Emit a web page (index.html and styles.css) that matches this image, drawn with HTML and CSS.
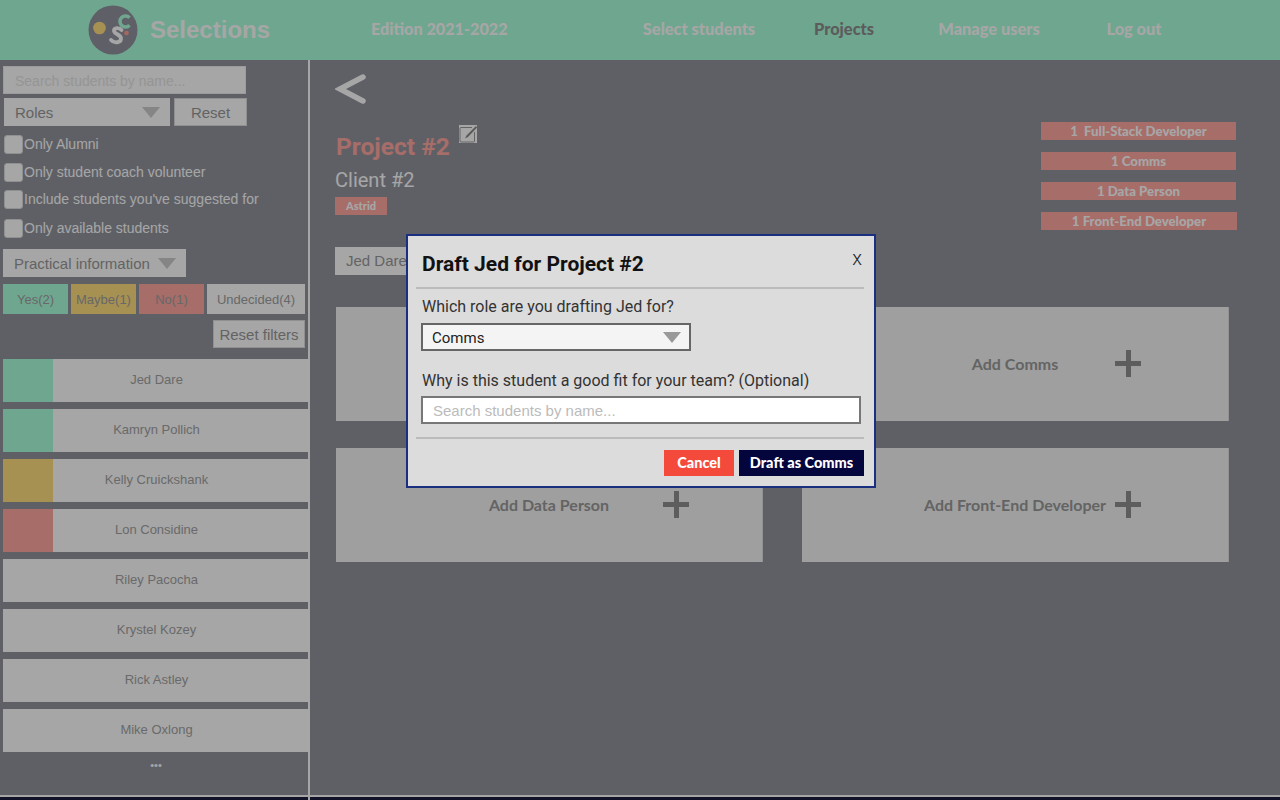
FILE: index.html
```html
<!DOCTYPE html>
<html lang="en">
<head>
<meta charset="utf-8">
<title>Selections</title>
<link rel="stylesheet" href="styles.css">
</head>
<body>
<header class="topbar">
  <div class="brand">
    <svg class="logo" viewBox="0 0 50 50" width="50" height="50">
      <circle cx="25" cy="25" r="24.500" fill="#93939f"/>
      <circle cx="11.500" cy="23" r="6.300" fill="#ffdf80"/>
      <path d="M33.500 25c-2-2.500-7.500-2.500-7.500.8 0 3.500 7 3.500 7 7.700 0 4.500-7 5-10 1.500" fill="none" stroke="#fff" stroke-width="3.800" stroke-linecap="round"/>
      <path d="M41.500 12.700a5.500 5.500 0 1 0 0 7.500" fill="none" stroke="#acffdc" stroke-width="3.500"/>
      <circle cx="38.500" cy="28" r="2.300" fill="#ff9f92"/>
    </svg>
    <span class="brand-name">Selections</span>
  </div>
  <span class="edition">Edition 2021-2022</span>
  <nav class="nav">
    <a class="nav-link">Select students</a>
    <a class="nav-link nav-active">Projects</a>
    <a class="nav-link">Manage users</a>
    <a class="nav-link">Log out</a>
  </nav>
</header>
<div class="layout">
  <aside class="sidebar">
    <input class="search" placeholder="Search students by name...">
    <div class="filter-row">
      <div class="select select-roles"><span>Roles</span><i class="caret"></i></div>
      <button class="btn btn-reset">Reset</button>
    </div>
    <label class="check check-1"><i class="box"></i>Only Alumni</label>
    <label class="check check-2"><i class="box"></i>Only student coach volunteer</label>
    <label class="check check-3"><i class="box"></i>Include students you've suggested for</label>
    <label class="check check-4"><i class="box"></i>Only available students</label>
    <div class="select select-info"><span>Practical information</span><i class="caret"></i></div>
    <div class="tabs">
      <div class="tab tab-yes">Yes(2)</div>
      <div class="tab tab-maybe">Maybe(1)</div>
      <div class="tab tab-no">No(1)</div>
      <div class="tab tab-undecided">Undecided(4)</div>
    </div>
    <div class="reset-row"><button class="btn btn-filters">Reset filters</button></div>
    <ul class="students">
      <li class="student"><i class="status st-yes"></i><span>Jed Dare</span></li>
      <li class="student"><i class="status st-yes"></i><span>Kamryn Pollich</span></li>
      <li class="student"><i class="status st-maybe"></i><span>Kelly Cruickshank</span></li>
      <li class="student"><i class="status st-no"></i><span>Lon Considine</span></li>
      <li class="student"><i class="status"></i><span>Riley Pacocha</span></li>
      <li class="student"><i class="status"></i><span>Krystel Kozey</span></li>
      <li class="student"><i class="status"></i><span>Rick Astley</span></li>
      <li class="student"><i class="status"></i><span>Mike Oxlong</span></li>
    </ul>
    <div class="more">•••</div>
  </aside>
  <main class="content">
    <svg class="back" viewBox="0 0 32 30" width="32" height="30"><path d="M28 3 5 15l23 12" fill="none" stroke="#fff" stroke-width="5.500" stroke-linecap="round"/></svg>
    <div class="project-head">
      <div class="project-info">
        <div class="title-row">
          <h1 class="project-title">Project #2</h1>
          <svg class="edit" viewBox="0 0 18 18" width="18" height="18">
            <rect width="18" height="18" fill="#fff"/>
            <path d="M13 2.500H2a1 1 0 0 0-1 1V16a1 1 0 0 0 1 1h12.500a1 1 0 0 0 1-1V7" fill="none" stroke="#999" stroke-width="1"/>
            <path d="M17 1 7.500 10.500 6 13.500l3-1.500L18 2.500z" fill="#888"/>
          </svg>
        </div>
        <div class="client">Client #2</div>
        <span class="coach">Astrid</span>
      </div>
      <div class="needs">
        <div class="need">1&nbsp; Full-Stack Developer</div>
        <div class="need">1 Comms</div>
        <div class="need">1 Data Person</div>
        <div class="need need-wide">1 Front-End Developer</div>
      </div>
    </div>
    <div class="drafted"><span class="chip">Jed Dare</span></div>
    <div class="slots">
      <div class="slot"><span>Add Full-Stack Developer</span><i class="plus"></i></div>
      <div class="slot"><span>Add Comms</span><i class="plus"></i></div>
      <div class="slot"><span>Add Data Person</span><i class="plus"></i></div>
      <div class="slot"><span>Add Front-End Developer</span><i class="plus"></i></div>
    </div>
  </main>
</div>
<div class="footer-bar"></div>
<div class="overlay"></div>
<div class="modal">
  <div class="modal-head">
    <h2 class="modal-title">Draft Jed for Project #2</h2>
    <span class="close">x</span>
  </div>
  <div class="modal-body">
    <p class="modal-label">Which role are you drafting Jed for?</p>
    <div class="modal-select"><span>Comms</span><i class="caret"></i></div>
    <p class="modal-label modal-label-2">Why is this student a good fit for your team? (Optional)</p>
    <input class="modal-input" placeholder="Search students by name...">
  </div>
  <div class="modal-foot">
    <button class="action action-cancel">Cancel</button>
    <button class="action action-draft">Draft as Comms</button>
  </div>
</div>
</body>
</html>
```
FILE: styles.css
```css
* { box-sizing: border-box; }
html, body { margin: 0; height: 800px; overflow: hidden; }
body {
  background: #92949d;
  font-family: "Liberation Sans", Arial, sans-serif;
  display: flex;
  flex-direction: column;
}
.topbar {
  height: 60px;
  flex: none;
  background: #abffdc;
  display: flex;
  align-items: center;
  font-family: Lato, sans-serif;
  font-weight: 900;
  color: #fff;
  padding-left: 88px;
}
.brand { display: flex; align-items: center; gap: 12px; width: 283px; }
.logo { display: block; }
.brand-name { font-family: "Liberation Sans", sans-serif; font-size: 24px; font-weight: 700; }
.edition { font-size: 16.200px; width: 255.500px; padding-bottom: 3px; }
.nav { display: grid; grid-template-columns: repeat(4, 145px); padding-bottom: 3px; }
.nav-link { font-size: 16.400px; text-align: center; }
.nav-active { color: #8e8e8e; }
.layout { flex: 1; display: flex; min-height: 0; }
.sidebar {
  width: 310px;
  flex: none;
  border-right: 2px solid #fff;
  padding: 6px 0 0 3px;
  color: #fff;
  font-size: 14px;
}
.search {
  display: block;
  width: 243px;
  height: 28px;
  background: #fff;
  border: 1px solid #eee;
  padding: 2px 11px 0;
  font: 14px "Liberation Sans", sans-serif;
}
.search::placeholder { color: #e5e5e5; }
.filter-row { display: flex; gap: 4px; margin-top: 4px; }
.select {
  background: #fff;
  color: #999;
  display: flex;
  align-items: center;
  justify-content: space-between;
  height: 28px;
  font-size: 15px;
}
.select-roles { width: 166px; margin-left: 1px; padding: 0 10px 0 11px; }
.select-info { width: 183px; margin-top: 11px; padding: 0 10px 0 11px; }
.caret {
  display: block;
  width: 0;
  height: 0;
  border-left: 9.500px solid transparent;
  border-right: 9.500px solid transparent;
  border-top: 11px solid #ccc;
}
.btn {
  background: #fff;
  border: 1px solid #ddd;
  color: #999;
  font: 15px "Liberation Sans", sans-serif;
  padding: 0;
}
.btn-reset { width: 73px; height: 28px; }
.check { display: flex; align-items: center; gap: 1px; height: 20px; color: #fff; margin-left: 1px; }
.check-1 { margin-top: 8px; }
.check-2 { margin-top: 8px; }
.check-3 { margin-top: 7px; }
.check-4 { margin-top: 9px; }
.box {
  display: block;
  width: 19px;
  height: 19px;
  background: #fff;
  border: 1px solid #ddd;
  border-radius: 3px;
}
.tabs { display: flex; gap: 3px; margin-top: 7px; }
.tab {
  height: 30px;
  width: 65px;
  color: #a0a0a0;
  display: flex;
  align-items: center;
  justify-content: center;
  font-size: 13px;
}
.tab-yes { background: #abffdc; }
.tab-maybe { background: #ffdf80; }
.tab-no { background: #ffa8a2; }
.tab-undecided { background: #fff; width: 98px; }
.reset-row { display: flex; justify-content: flex-end; margin-top: 6px; padding-right: 3px; }
.btn-filters { width: 92px; height: 28px; }
.students { list-style: none; margin: 11px 0 0; padding: 0; }
.student {
  height: 43px;
  margin-bottom: 7px;
  background: #fff;
  display: flex;
  align-items: center;
  color: #a3a3a3;
  font-size: 13px;
  width: 305px;
}
.status { display: block; width: 50px; height: 100%; flex: none; }
.st-yes { background: #abffdc; }
.st-maybe { background: #ffdf80; }
.st-no { background: #ffa8a2; }
.student span { flex: 1; text-align: center; padding: 0 48px 2px 0; }
.more { text-align: center; width: 306px; color: #fff; font-size: 11px; line-height: 12px; }
.content { flex: 1; position: relative; padding: 14px 43px 0 25px; min-width: 0; }
.back { display: block; }
.project-head { display: flex; justify-content: space-between; align-items: flex-start; margin-top: 2px; }
.title-row { display: flex; align-items: flex-start; gap: 9px; }
.project-title { margin: 26px 0 0 1px; font: 700 24.600px/30px Roboto, sans-serif; color: #ffa8a2; }
.edit { display: block; margin-top: 19px; }
.client { font: 20px/24px Roboto, sans-serif; color: #fff; margin-top: 6px; }
.coach {
  display: inline-block;
  margin-top: 5px;
  background: #ffa8a2;
  color: #fff;
  font: 900 11px/18px Lato, sans-serif;
  padding: 0 11px;
}
.needs { display: flex; flex-direction: column; gap: 12px; margin-top: 16px; align-items: flex-start; }
.need {
  width: 195px;
  height: 18px;
  background: #ffa8a2;
  color: #fff;
  font: 900 13.200px/18px Lato, sans-serif;
  text-align: center;
}
.need-wide { width: 196px; }
.drafted { margin-top: 17px; height: 28px; }
.chip {
  display: inline-block;
  background: #fff;
  color: #999;
  height: 28px;
  padding: 0 20px 0 11px;
  font: 15px/28px "Liberation Sans", sans-serif;
  width: 200px;
}
.slots { display: grid; grid-template-columns: 427px 427px; column-gap: 39px; row-gap: 27px; margin-top: 32px; margin-left: 1px; }
.slot {
  height: 114px;
  background: #f5f5f5;
  border-right: 1px solid #e0e0e0;
  color: #9a9a9a;
  display: flex;
  align-items: center;
  justify-content: center;
  font: 700 16px Lato, sans-serif;
  position: relative;
}
.slot span { padding-bottom: 2px; }
.plus {
  position: absolute;
  left: 313px;
  top: 43px;
  width: 26px;
  height: 27px;
  background: linear-gradient(#8f8f8f,#8f8f8f) center/100% 5px no-repeat, linear-gradient(#8f8f8f,#8f8f8f) center/5px 100% no-repeat;
}
.slot:nth-child(odd) .plus { left: 327px; }
.footer-bar {
  height: 5px;
  flex: none;
  background: linear-gradient(90deg, #1c1c40 308px, #fff 308px, #fff 310px, #1c1c40 310px);
  border-top: 2px solid #fff;
}
.overlay { position: fixed; inset: 0; background: rgba(0,0,0,.35); }
.modal {
  position: fixed;
  left: 406px;
  top: 234px;
  width: 470px;
  height: 254px;
  background: #dcdcdc;
  border: 2px solid #1a2f80;
  padding: 0 10px 0 8px;
  font-family: Roboto, sans-serif;
}
.modal-head { height: 53px; border-bottom: 2px solid #bbb; position: relative; padding: 0 6px; }
.modal-title { margin: 0; font: 700 21px/56px Roboto, sans-serif; color: #111; }
.close { position: absolute; right: 2px; top: 9px; font-size: 20px; font-weight: 300; line-height: 26px; color: #222; }
.modal-body { height: 150px; border-bottom: 2px solid #bbb; padding: 0 6px; }
.modal-label { margin: 0; font-size: 16px; line-height: 19px; color: #333; padding-top: 8px; height: 27px; }
.modal-select {
  margin-top: 7px;
  margin-left: -1px;
  width: 270px;
  height: 28px;
  background: #f4f4f4;
  border: 2px solid #666;
  display: flex;
  align-items: center;
  justify-content: space-between;
  padding: 1px 8px 0 9px;
  font: 15px Roboto, sans-serif;
  color: #222;
}
.modal-select .caret { border-top-color: #999; }
.modal-label-2 { margin-top: 17px; padding-top: 3px; height: 22px; }
.modal-input {
  display: block;
  margin-top: 6px;
  margin-left: -1px;
  width: 440px;
  height: 28px;
  background: #fff;
  border: 2px solid #777;
  padding: 0 10px;
  font: 15px "Liberation Sans", sans-serif;
}
.modal-input::placeholder { color: #bbb; }
.modal-foot { display: flex; justify-content: flex-end; gap: 5px; padding-top: 11px; }
.action { height: 26px; border: 0; color: #fff; font: 900 14.500px Lato, sans-serif; padding: 0 0 2px; }
.action-cancel { width: 70px; background: #f44a3c; }
.action-draft { width: 125px; background: #05053e; }
```
